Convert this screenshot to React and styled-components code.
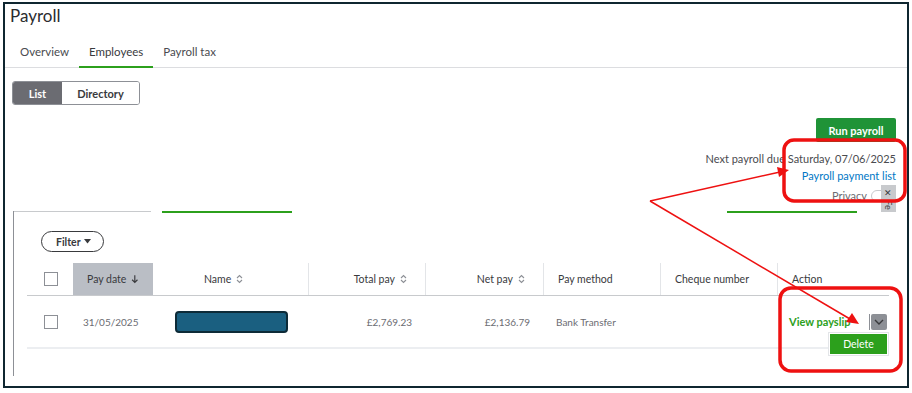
import React from "react";
import styled, { createGlobalStyle } from "styled-components";

const GlobalStyle = createGlobalStyle`
  html, body {
    margin: 0;
    padding: 0;
    background: #fff;
    font-family: Lato, "Open Sans", "Liberation Sans", sans-serif;
    color: #393a3d;
  }
  * { box-sizing: border-box; }
`;

const Page = styled.div`
  position: relative;
  width: 912px;
  height: 393px;
  overflow: hidden;
  padding: 2px 0 0 3px;
`;

const Frame = styled.div`
  position: relative;
  width: 906px;
  height: 386px;
  border: 2px solid #0f2630;
  overflow: hidden;
`;

const Title = styled.h1`
  margin: 0;
  padding: 1px 0 0 5px;
  font-size: 17px;
  font-weight: 400;
  color: #2b2c2f;
  line-height: 22px;
`;

const Tabs = styled.div`
  display: flex;
  margin-top: 17px;
  border-bottom: 1px solid #dcdde0;
  padding-left: 5px;
`;

const Tab = styled.div`
  padding: 0 10px 6px;
  font-size: 11.5px;
  color: ${(p) => (p.$active ? "#393a3d" : "#4a4b4f")};
  border-bottom: 2px solid ${(p) => (p.$active ? "#2ca01c" : "transparent")};
  margin-bottom: -1px;
  line-height: 16px;
  white-space: nowrap;
`;

const Toggle = styled.div`
  display: inline-flex;
  margin: 13px 0 0 7px;
  border: 1px solid #8d9096;
  border-radius: 3px;
  overflow: hidden;
  height: 24px;
`;

const ToggleItem = styled.div`
  display: flex;
  align-items: center;
  justify-content: center;
  width: ${(p) => p.$w}px;
  font-size: 11px;
  font-weight: 700;
  background: ${(p) => (p.$active ? "#6b6c72" : "#fff")};
  color: ${(p) => (p.$active ? "#fff" : "#393a3d")};
`;

const RightBlock = styled.div`
  display: flex;
  flex-direction: column;
  align-items: flex-end;
  padding-right: 11px;
  margin-top: 13px;
`;

const RunButton = styled.button`
  width: 80px;
  height: 24px;
  border: none;
  border-radius: 2px;
  background: #1f9337;
  color: #fff;
  font-family: inherit;
  font-size: 11px;
  font-weight: 700;
`;

const DueText = styled.div`
  margin-top: 9px;
  font-size: 11px;
  color: #4a4b4f;
  line-height: 16px;
  white-space: nowrap;
`;

const LinkText = styled.div`
  font-size: 11px;
  color: #0077c5;
  line-height: 17px;
`;

const PrivacyRow = styled.div`
  display: flex;
  align-items: flex-start;
  gap: 4px;
  font-size: 11px;
  color: #6b6c72;
  height: 27px;
  padding-top: 5px;
`;

const Switch = styled.div`
  width: 18px;
  height: 12px;
  margin-top: 1px;
  border: 1px solid #c8cacd;
  border-radius: 6px;
  background: #fff;
`;

const SideTab = styled.div`
  width: 15px;
  height: 27px;
  margin: -4px 0 0 -12px;
  background: #c8cacd;
  color: #393a3d;
  font-size: 9px;
  writing-mode: vertical-rl;
  display: flex;
  align-items: center;
  padding-top: 3px;
  overflow: hidden;
`;

const Card = styled.div`
  position: relative;
  margin: 0 0 0 8px;
  border-left: 1px solid #8d9096;
  height: 165px;
`;

const CardTop = styled.div`
  display: flex;
  align-items: flex-start;
  height: 2px;
`;

const TopLine = styled.div`
  width: ${(p) => p.$w}px;
  margin-left: ${(p) => p.$ml || 0}px;
  height: ${(p) => (p.$green ? 2 : 1)}px;
  background: ${(p) => (p.$green ? "#2ca01c" : "#c8cacd")};
`;

const FilterButton = styled.button`
  display: flex;
  align-items: center;
  gap: 3px;
  margin: 18px 0 0 27px;
  height: 21px;
  padding: 0 12px 0 14px;
  border: 1px solid #393a3d;
  border-radius: 11px;
  background: #fff;
  font-family: inherit;
  font-size: 10.5px;
  font-weight: 700;
  color: #393a3d;
`;

const Table = styled.div`
  margin: 11px 0 0 13px;
  width: 862px;
`;

const COLS = "46px 80px 155px 117px 118px 117px 117px 112px";

const HeadRow = styled.div`
  display: grid;
  grid-template-columns: ${COLS};
  height: 33px;
  border-bottom: 1px solid #c8cacd;
`;

const HeadCell = styled.div`
  display: flex;
  align-items: center;
  justify-content: ${(p) => p.$align || "flex-start"};
  gap: 5px;
  padding: 0 ${(p) => (p.$align === "flex-end" ? 18 : 14)}px 0 ${(p) => p.$pl ?? 14}px;
  font-size: 10.5px;
  color: #393a3d;
  white-space: nowrap;
  background: ${(p) => (p.$sorted ? "#babec5" : "transparent")};
  border-left: ${(p) => (p.$divider ? "1px solid #e3e5e8" : "none")};
`;

const BodyRow = styled.div`
  display: grid;
  grid-template-columns: ${COLS};
  height: 53px;
  border-bottom: 2px solid #eceef1;
`;

const Cell = styled.div`
  display: flex;
  align-items: center;
  justify-content: ${(p) => p.$align || "flex-start"};
  padding: 0 ${(p) => p.$pr ?? 13}px 0 ${(p) => p.$pl ?? 10}px;
  font-size: 10px;
  color: #6b6c72;
  white-space: nowrap;
`;

const Checkbox = styled.div`
  width: 14px;
  height: 14px;
  border: 1px solid #8d9096;
  margin-left: 17px;
  background: #fff;
`;

const Redacted = styled.div`
  width: 113px;
  height: 22px;
  background: #1a5f80;
  border: 2px solid #0d2b38;
  border-radius: 4px;
`;

const ActionCell = styled.div`
  position: relative;
  display: flex;
  align-items: center;
  padding-left: 12px;
  white-space: nowrap;
`;

const PayslipLink = styled.span`
  font-size: 11px;
  font-weight: 700;
  color: #2ca01c;
`;

const Divider = styled.span`
  width: 1px;
  height: 16px;
  background: #8d9096;
  margin-left: ${(p) => p.$ml}px;
`;

const Caret = styled.div`
  display: flex;
  align-items: center;
  justify-content: center;
  width: 16px;
  height: 16px;
  margin-left: 1px;
  background: #8d9096;
  border-radius: 2px;
`;

const DeleteMenu = styled.div`
  position: absolute;
  left: 51px;
  top: 36px;
  width: 61px;
  height: 24px;
  padding: 1px;
  background: #fff;
  border: 1px solid #e3e5e8;
`;

const DeleteButton = styled.div`
  display: flex;
  align-items: center;
  justify-content: center;
  height: 100%;
  background: #2ca01c;
  color: #fff;
  font-size: 10.5px;
`;

const Overlay = styled.svg`
  position: absolute;
  left: 0;
  top: 0;
  pointer-events: none;
`;

const SortIcon = () => (
  <svg width="7" height="10" viewBox="0 0 7 10">
    <path d="M1 4 L3.5 1.5 L6 4 M1 6 L3.5 8.5 L6 6" fill="none" stroke="#8d9096" strokeWidth="1.1" />
  </svg>
);

const DownArrow = () => (
  <svg width="8" height="10" viewBox="0 0 8 10">
    <path d="M4 1 V8.5 M1.2 5.8 L4 8.6 L6.8 5.8" fill="none" stroke="#393a3d" strokeWidth="1.2" />
  </svg>
);

const App = () => {
  return (
    <Page>
      <GlobalStyle />
      <Frame>
        <Title>Payroll</Title>
        <Tabs>
          <Tab>Overview</Tab>
          <Tab $active>Employees</Tab>
          <Tab>Payroll tax</Tab>
        </Tabs>
        <Toggle>
          <ToggleItem $active $w={49}>List</ToggleItem>
          <ToggleItem $w={77}>Directory</ToggleItem>
        </Toggle>
        <RightBlock>
          <RunButton>Run payroll</RunButton>
          <DueText>Next payroll due Saturday, 07/06/2025</DueText>
          <LinkText>Payroll payment list</LinkText>
          <PrivacyRow>
            Privacy
            <Switch />
            <SideTab>✕ Fe</SideTab>
          </PrivacyRow>
        </RightBlock>
        <Card>
          <CardTop>
            <TopLine $w={137} />
            <TopLine $green $w={130} $ml={11} />
            <TopLine $green $w={130} $ml={435} />
          </CardTop>
          <FilterButton>
            Filter
            <svg width="7" height="5" viewBox="0 0 7 5">
              <path d="M0 0 H7 L3.5 4.5 Z" fill="#393a3d" />
            </svg>
          </FilterButton>
          <Table>
            <HeadRow>
              <Cell $pl={0}><Checkbox /></Cell>
              <HeadCell $sorted>Pay date <DownArrow /></HeadCell>
              <HeadCell $pl={51}>Name <SortIcon /></HeadCell>
              <HeadCell $divider $align="flex-end">Total pay <SortIcon /></HeadCell>
              <HeadCell $divider $align="flex-end">Net pay <SortIcon /></HeadCell>
              <HeadCell $divider>Pay method</HeadCell>
              <HeadCell $divider>Cheque number</HeadCell>
              <HeadCell $divider>Action</HeadCell>
            </HeadRow>
            <BodyRow>
              <Cell $pl={0}><Checkbox /></Cell>
              <Cell>31/05/2025</Cell>
              <Cell $pl={22}><Redacted /></Cell>
              <Cell $align="flex-end">£2,769.23</Cell>
              <Cell $align="flex-end">£2,136.79</Cell>
              <Cell $pl={13}>Bank Transfer</Cell>
              <Cell />
              <ActionCell>
                <PayslipLink>View payslip</PayslipLink>
                <Divider $ml={19} />
                <Caret>
                  <svg width="10" height="6" viewBox="0 0 10 6">
                    <path d="M1 1 L5 5 L9 1" fill="none" stroke="#393a3d" strokeWidth="1.4" />
                  </svg>
                </Caret>
                <DeleteMenu>
                  <DeleteButton>Delete</DeleteButton>
                </DeleteMenu>
              </ActionCell>
            </BodyRow>
          </Table>
        </Card>
      </Frame>
      <Overlay width="912" height="393" viewBox="0 0 912 393">
        <rect x="784" y="140" width="121" height="61" rx="10" fill="none" stroke="#ee1111" strokeWidth="3.5" />
        <rect x="780" y="288" width="121" height="83" rx="11" fill="none" stroke="#ee1111" strokeWidth="3.5" />
        <line x1="650" y1="201" x2="780" y2="172" stroke="#ee1111" strokeWidth="1.5" />
        <path d="M789 170 L777 167 L779 177 Z" fill="#ee1111" />
        <line x1="650" y1="201" x2="850" y2="319" stroke="#ee1111" strokeWidth="1.5" />
        <path d="M859 324 L846 322 L852 313 Z" fill="#ee1111" />
      </Overlay>
    </Page>
  );
};

export default App;
